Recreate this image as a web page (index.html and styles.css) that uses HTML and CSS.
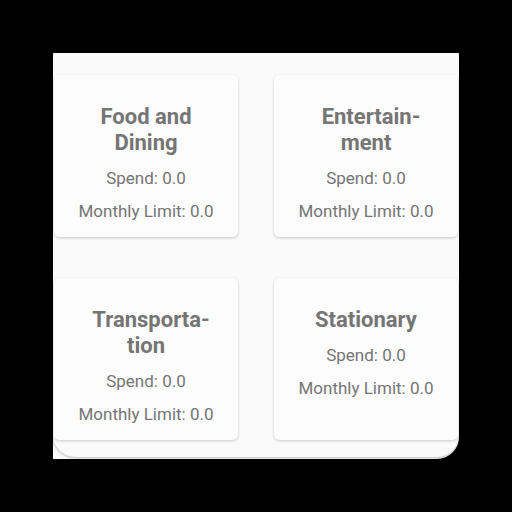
FILE: index.html
```html
<!DOCTYPE html>
<html>
<head>
<meta charset="utf-8">
<link rel="stylesheet" href="styles.css">
</head>
<body>
<div class="frame">
  <div class="screen">
    <div class="grid">
      <div class="card">
        <div class="title">Food and<br>Dining</div>
        <div class="line">Spend: 0.0</div>
        <div class="line">Monthly Limit: 0.0</div>
      </div>
      <div class="card">
        <div class="title">Entertain<span class="hy">-</span><br>ment</div>
        <div class="line">Spend: 0.0</div>
        <div class="line">Monthly Limit: 0.0</div>
      </div>
      <div class="card">
        <div class="title">Transporta<span class="hy">-</span><br>tion</div>
        <div class="line">Spend: 0.0</div>
        <div class="line">Monthly Limit: 0.0</div>
      </div>
      <div class="card">
        <div class="title">Stationary</div>
        <div class="line">Spend: 0.0</div>
        <div class="line">Monthly Limit: 0.0</div>
      </div>
    </div>
  </div>
</div>
</body>
</html>
```
FILE: styles.css
```css
html, body {
  margin: 0;
  padding: 0;
  background: #000;
  width: 512px;
  height: 512px;
  overflow: hidden;
}
.frame {
  margin: 53px;
  width: 406px;
  height: 406px;
  background: #fafafa;
  overflow: hidden;
  border-bottom-right-radius: 22px;
}
.screen {
  margin-top: -16px;
  height: 420px;
  background: #fafafa;
  border-radius: 22px;
  box-shadow: 0 1px 3px rgba(0,0,0,0.28);
  box-sizing: border-box;
  padding: 38px 0 0 1px;
}
.grid {
  display: grid;
  grid-template-columns: 184px 184px;
  grid-template-rows: 162px 162px;
  column-gap: 36px;
  row-gap: 41px;
}
.card {
  background: #fcfcfc;
  border-radius: 5px;
  box-shadow: 0 1px 3px rgba(0,0,0,0.2);
  padding-top: 28px;
  box-sizing: border-box;
  text-align: center;
  font-family: Roboto, "Liberation Sans", sans-serif;
  color: #757575;
}
.title {
  font-size: 22px;
  font-weight: 700;
  line-height: 26px;
  padding-top: 1px;
  margin-bottom: -1px;
}
.hy {
  margin-right: -10px;
}
.line {
  font-size: 17px;
  line-height: 20px;
  margin-top: 13px;
}
```
